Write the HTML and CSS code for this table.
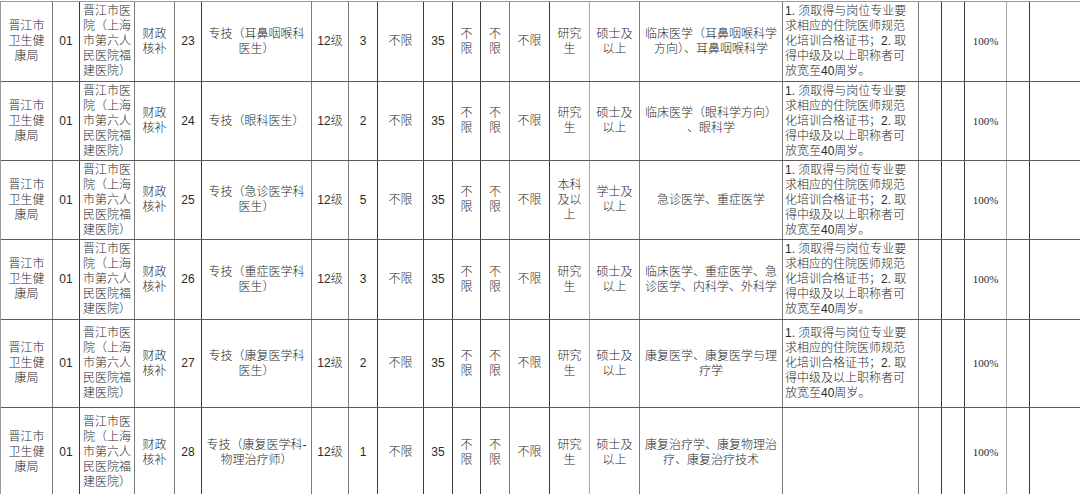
FILE: index.html
```html
<!DOCTYPE html>
<html lang="zh-CN">
<head>
<meta charset="utf-8">
<title>岗位表</title>
<link rel="stylesheet" href="styles.css">
</head>
<body>
<div class="table">
  <div class="row h80">
    <div class="c">晋江市卫生健康局</div><div class="c">01</div><div class="c">晋江市医院（上海市第六人民医院福建医院）</div><div class="c">财政核补</div><div class="c">23</div>
    <div class="c">专技（耳鼻咽喉科<br>医生）</div><div class="c">12级</div><div class="c">3</div><div class="c">不限</div><div class="c">35</div>
    <div class="c">不限</div><div class="c">不限</div><div class="c">不限</div><div class="c">研究生</div><div class="c">硕士及以上</div>
    <div class="c">临床医学（耳鼻咽喉科学<br>方向）、耳鼻咽喉科学</div>
    <div class="c left">1. 须取得与岗位专业要<br>求相应的住院医师规范<br>化培训合格证书；2. 取<br>得中级及以上职称者可<br>放宽至40周岁。</div>
    <div class="c"></div><div class="c"></div><div class="c pct">100%</div><div class="c"></div><div class="c"></div>
  </div>
  <div class="row h79">
    <div class="c">晋江市卫生健康局</div><div class="c">01</div><div class="c">晋江市医院（上海市第六人民医院福建医院）</div><div class="c">财政核补</div><div class="c">24</div>
    <div class="c">专技（眼科医生）</div><div class="c">12级</div><div class="c">2</div><div class="c">不限</div><div class="c">35</div>
    <div class="c">不限</div><div class="c">不限</div><div class="c">不限</div><div class="c">研究生</div><div class="c">硕士及以上</div>
    <div class="c">临床医学（眼科学方向）<br>、眼科学</div>
    <div class="c left">1. 须取得与岗位专业要<br>求相应的住院医师规范<br>化培训合格证书；2. 取<br>得中级及以上职称者可<br>放宽至40周岁。</div>
    <div class="c"></div><div class="c"></div><div class="c pct">100%</div><div class="c"></div><div class="c"></div>
  </div>
  <div class="row h79">
    <div class="c">晋江市卫生健康局</div><div class="c">01</div><div class="c">晋江市医院（上海市第六人民医院福建医院）</div><div class="c">财政核补</div><div class="c">25</div>
    <div class="c">专技（急诊医学科<br>医生）</div><div class="c">12级</div><div class="c">5</div><div class="c">不限</div><div class="c">35</div>
    <div class="c">不限</div><div class="c">不限</div><div class="c">不限</div><div class="c">本科及以上</div><div class="c">学士及以上</div>
    <div class="c">急诊医学、重症医学</div>
    <div class="c left">1. 须取得与岗位专业要<br>求相应的住院医师规范<br>化培训合格证书；2. 取<br>得中级及以上职称者可<br>放宽至40周岁。</div>
    <div class="c"></div><div class="c"></div><div class="c pct">100%</div><div class="c"></div><div class="c"></div>
  </div>
  <div class="row h80">
    <div class="c">晋江市卫生健康局</div><div class="c">01</div><div class="c">晋江市医院（上海市第六人民医院福建医院）</div><div class="c">财政核补</div><div class="c">26</div>
    <div class="c">专技（重症医学科<br>医生）</div><div class="c">12级</div><div class="c">3</div><div class="c">不限</div><div class="c">35</div>
    <div class="c">不限</div><div class="c">不限</div><div class="c">不限</div><div class="c">研究生</div><div class="c">硕士及以上</div>
    <div class="c">临床医学、重症医学、急<br>诊医学、内科学、外科学</div>
    <div class="c left">1. 须取得与岗位专业要<br>求相应的住院医师规范<br>化培训合格证书；2. 取<br>得中级及以上职称者可<br>放宽至40周岁。</div>
    <div class="c"></div><div class="c"></div><div class="c pct">100%</div><div class="c"></div><div class="c"></div>
  </div>
  <div class="row h88">
    <div class="c">晋江市卫生健康局</div><div class="c">01</div><div class="c">晋江市医院（上海市第六人民医院福建医院）</div><div class="c">财政核补</div><div class="c">27</div>
    <div class="c">专技（康复医学科<br>医生）</div><div class="c">12级</div><div class="c">2</div><div class="c">不限</div><div class="c">35</div>
    <div class="c">不限</div><div class="c">不限</div><div class="c">不限</div><div class="c">研究生</div><div class="c">硕士及以上</div>
    <div class="c">康复医学、康复医学与理<br>疗学</div>
    <div class="c left">1. 须取得与岗位专业要<br>求相应的住院医师规范<br>化培训合格证书；2. 取<br>得中级及以上职称者可<br>放宽至40周岁。</div>
    <div class="c"></div><div class="c"></div><div class="c pct">100%</div><div class="c"></div><div class="c"></div>
  </div>
  <div class="row h90">
    <div class="c">晋江市卫生健康局</div><div class="c">01</div><div class="c">晋江市医院（上海市第六人民医院福建医院）</div><div class="c">财政核补</div><div class="c">28</div>
    <div class="c">专技（康复医学科-<br>物理治疗师）</div><div class="c">12级</div><div class="c">1</div><div class="c">不限</div><div class="c">35</div>
    <div class="c">不限</div><div class="c">不限</div><div class="c">不限</div><div class="c">研究生</div><div class="c">硕士及以上</div>
    <div class="c">康复治疗学、康复物理治<br>疗、康复治疗技术</div>
    <div class="c left"></div>
    <div class="c"></div><div class="c"></div><div class="c pct">100%</div><div class="c"></div><div class="c"></div>
  </div>
</div>
</body>
</html>
```

FILE: styles.css
```css
html, body {
  margin: 0;
  padding: 0;
  background: #ffffff;
  overflow: hidden;
  height: 494px;
}

.table {
  margin-top: 1px;
  width: 1079px;
  border-top: 1px solid #9a9a9a;
  border-left: 1px solid #9a9a9a;
  display: flex;
  flex-direction: column;
  font-family: "Liberation Sans", "Noto Sans CJK SC", sans-serif;
  font-size: 12px;
  font-weight: 300;
  line-height: 15px;
  color: #2a2a2a;
}

.row {
  display: grid;
  grid-template-columns: 52px 27px 55px 40px 27px 110px 37px 29px 46px 29px 28px 29px 40px 40px 50px 143px 136px 23px 23px 42px 23px 50px;
  box-sizing: border-box;
  border-bottom: 1px solid #5a5a5a;
  flex: none;
}

.h79 { height: 79px; }
.h80 { height: 80px; }
.h88 { height: 88px; }
.h90 { height: 90px; }

.c {
  box-sizing: border-box;
  border-right: 1px solid #7a7a7a;
  padding: 0 3px;
  display: flex;
  align-items: center;
  justify-content: center;
  text-align: center;
  word-break: break-all;
  overflow: hidden;
}

.c.left {
  justify-content: flex-start;
  text-align: left;
  padding-left: 2px;
  white-space: nowrap;
}

.c.pct {
  font-size: 11px;
  font-family: "Liberation Serif", "Noto Sans CJK SC", serif;
  font-weight: 400;
}

/* darker rules */
.row > .c:nth-child(2),
.row > .c:nth-child(5),
.row > .c:nth-child(8),
.row > .c:nth-child(9),
.row > .c:nth-child(10),
.row > .c:nth-child(11),
.row > .c:nth-child(13),
.row > .c:nth-child(18),
.row > .c:nth-child(19),
.row > .c:nth-child(21) {
  border-right-color: #3a3a3a;
}

/* lighter rules */
.row > .c:nth-child(14),
.row > .c:nth-child(20) {
  border-right-color: #a8a8a8;
}

.row > .c:nth-child(22) {
  border-right: none;
}
```
